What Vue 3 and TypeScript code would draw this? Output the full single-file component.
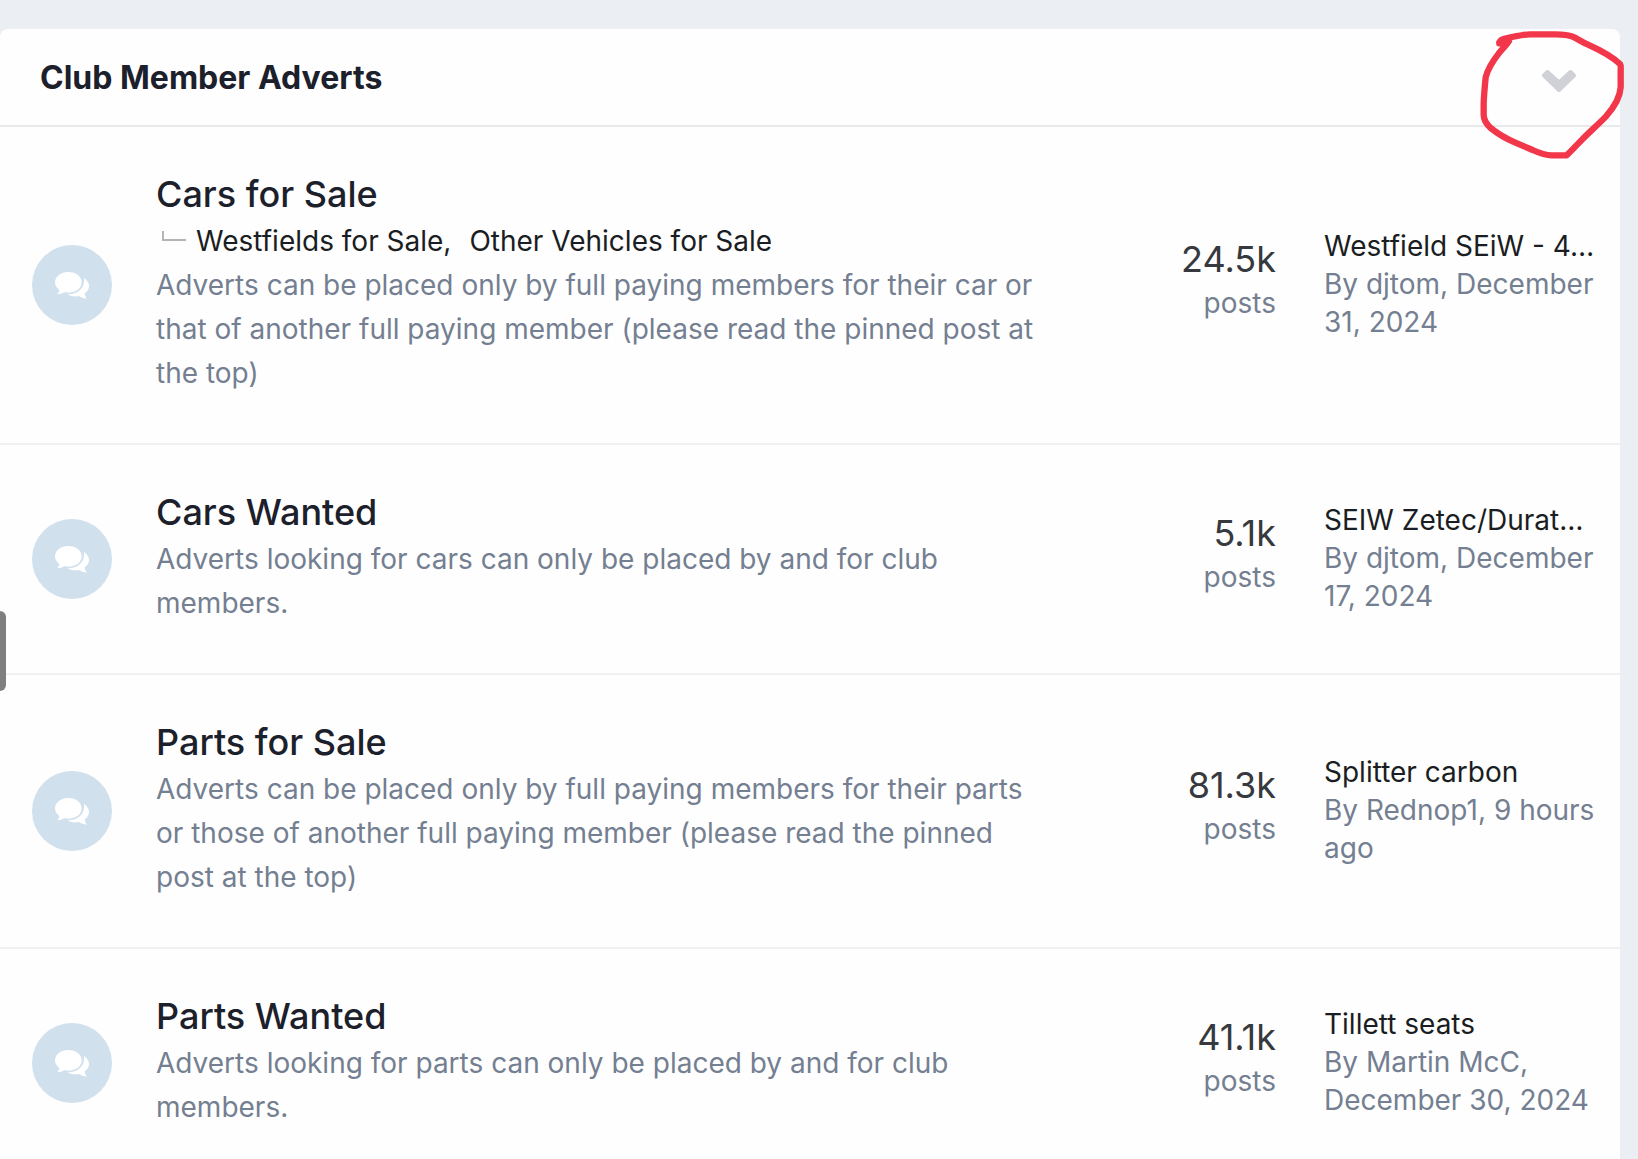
<script setup lang="ts">
import { ref } from 'vue'

interface Forum {
  title: string
  subforums: string[]
  description: string
  posts: string
  lastTitle: string
  author: string
  date: string
}

const open = ref(true)

const forums: Forum[] = [
  {
    title: 'Cars for Sale',
    subforums: ['Westfields for Sale', 'Other Vehicles for Sale'],
    description:
      'Adverts can be placed only by full paying members for their car or that of another full paying member (please read the pinned post at the top)',
    posts: '24.5k',
    lastTitle: 'Westfield SEiW - 4…',
    author: 'djtom',
    date: 'December 31, 2024',
  },
  {
    title: 'Cars Wanted',
    subforums: [],
    description: 'Adverts looking for cars can only be placed by and for club members.',
    posts: '5.1k',
    lastTitle: 'SEIW Zetec/Durat…',
    author: 'djtom',
    date: 'December 17, 2024',
  },
  {
    title: 'Parts for Sale',
    subforums: [],
    description:
      'Adverts can be placed only by full paying members for their parts or those of another full paying member (please read the pinned post at the top)',
    posts: '81.3k',
    lastTitle: 'Splitter carbon',
    author: 'Rednop1',
    date: '9 hours ago',
  },
  {
    title: 'Parts Wanted',
    subforums: [],
    description: 'Adverts looking for parts can only be placed by and for club members.',
    posts: '41.1k',
    lastTitle: 'Tillett seats',
    author: 'Martin McC',
    date: 'December 30, 2024',
  },
]
</script>

<template>
  <main class="page">
    <section class="card">
      <header class="card-header">
        <h2>Club Member Adverts</h2>
        <button class="toggle" type="button" aria-label="Toggle this category" :aria-expanded="open" @click="open = !open">
          <svg viewBox="0 0 34 22" aria-hidden="true">
            <path d="M2 5.5L5.5 2L17 12.5L28.5 2L32 5.5L17 20Z" />
          </svg>
        </button>
      </header>

      <ul v-show="open" class="forums">
        <li v-for="forum in forums" :key="forum.title" class="forum">
          <span class="icon">
            <svg viewBox="0 0 102 81" aria-hidden="true">
              <path d="M40 0C63 0 80 13 80 31C80 49 62 62 40 62C36 62 31 62 28 61C22 65 15 67 6 67C10 63 13 59 13 54C5 48 0 40 0 31C0 13 18 0 40 0Z" />
              <path d="M87 18C97 24 102 33 102 42C102 51 97 59 89 64C90 70 92 74 95 80C85 79 79 76 72 72C58 75 45 72 37 67C66 68 91 50 87 18Z" />
            </svg>
          </span>

          <div class="main">
            <h3><a href="#">{{ forum.title }}</a></h3>
            <ul v-if="forum.subforums.length" class="subforums">
              <li v-for="(sub, i) in forum.subforums" :key="sub">
                <a href="#">{{ sub }}</a><template v-if="i < forum.subforums.length - 1">,</template>
              </li>
            </ul>
            <p>{{ forum.description }}</p>
          </div>

          <div class="stats">
            <span class="count">{{ forum.posts }}</span>
            <span class="label">posts</span>
          </div>

          <div class="last">
            <a class="last-title" href="#">{{ forum.lastTitle }}</a>
            <span>By <a href="#">{{ forum.author }}</a>, <a href="#">{{ forum.date }}</a></span>
          </div>
        </li>
      </ul>
    </section>

    <div class="drag-handle" aria-hidden="true"></div>

    <svg class="scribble" viewBox="0 0 600 540" aria-hidden="true">
      <path
        d="M184 130C186 116 200 116 222 111Q262 103 275 103H352Q388 103 404 110C422 118 430 126 450 134C490 152 518 166 546 192Q549 196 548 212V262C546 292 532 318 504 349C480 374 450 400 430 421Q398 454 386 466H342Q318 466 284 450L232 428C200 414 180 402 158 384Q137 364 137 344V310C138 284 140 262 143 232C150 204 170 176 184 158C196 144 206 134 213 123Q204 116 194 124Q186 132 184 128"
      />
    </svg>
  </main>
</template>

<style>
body {
  margin: 0;
  background: #ebeff4;
}
</style>

<style scoped>
.page {
  position: relative;
  padding: 29px 18px 0 0;
  font-family: Inter, 'Liberation Sans', sans-serif;
  font-size: 28px;
  line-height: 44px;
  color: #747f91;
}

.card {
  background: #fefefe;
  border-radius: 8px;
}

.card-header {
  display: flex;
  align-items: center;
  justify-content: space-between;
  padding: 27px 44px 25px 40px;
  border-bottom: 2px solid #e8e9eb;
}

h2 {
  margin: 0;
  font-size: 32px;
  font-weight: 700;
  color: #1c202b;
}

.toggle {
  display: flex;
  padding: 6px 0 0;
  border: 0;
  background: none;
  cursor: pointer;
}

.toggle svg {
  width: 34px;
  height: 22px;
  fill: #d0d1d6;
  stroke: #d0d1d6;
  stroke-width: 4;
  stroke-linejoin: round;
}

ul {
  margin: 0;
  padding: 0;
  list-style: none;
}

.forum {
  display: grid;
  grid-template-columns: 80px minmax(0, 1fr) 182px 272px;
  column-gap: 48px;
  align-items: center;
  padding: 48px 24px 48px 32px;
  border-bottom: 2px solid #f1f1f3;
}

.icon {
  display: flex;
  align-items: center;
  justify-content: center;
  width: 80px;
  height: 80px;
  border-radius: 50%;
  background: #d0e0ed;
}

.icon svg {
  width: 34px;
  height: 27px;
  fill: #fff;
}

.main {
  margin-left: -4px;
}

a {
  color: inherit;
  text-decoration: none;
}

h3 {
  margin: 0 0 6px;
  font-size: 36px;
  font-weight: 500;
  line-height: 38px;
  color: #1c202b;
}

.subforums {
  display: flex;
  gap: 18px;
  color: #1a1d22;
}

.subforums::before {
  content: '';
  width: 22px;
  height: 8px;
  margin: 12px -8px 0 6px;
  border: solid #b4b4b6;
  border-width: 0 0 2px 2px;
}

p {
  margin: 0;
}

.stats {
  display: flex;
  flex-direction: column;
  padding-bottom: 8px;
  text-align: right;
}

.count {
  font-size: 36px;
  color: #36393d;
}

.last {
  display: flex;
  flex-direction: column;
  padding-bottom: 2px;
  line-height: 38px;
}

.last-title {
  overflow: hidden;
  color: #1a1d22;
  text-overflow: ellipsis;
  white-space: nowrap;
}

.drag-handle {
  position: absolute;
  top: 611px;
  left: 0;
  width: 6px;
  height: 80px;
  border-radius: 0 6px 6px 0;
  background: #7f7f7f;
}

.scribble {
  position: absolute;
  top: 0;
  right: 0;
  width: 200px;
  height: 180px;
  fill: none;
  stroke: #f2374a;
  stroke-width: 19;
  stroke-linecap: round;
  stroke-linejoin: round;
  pointer-events: none;
}
</style>
